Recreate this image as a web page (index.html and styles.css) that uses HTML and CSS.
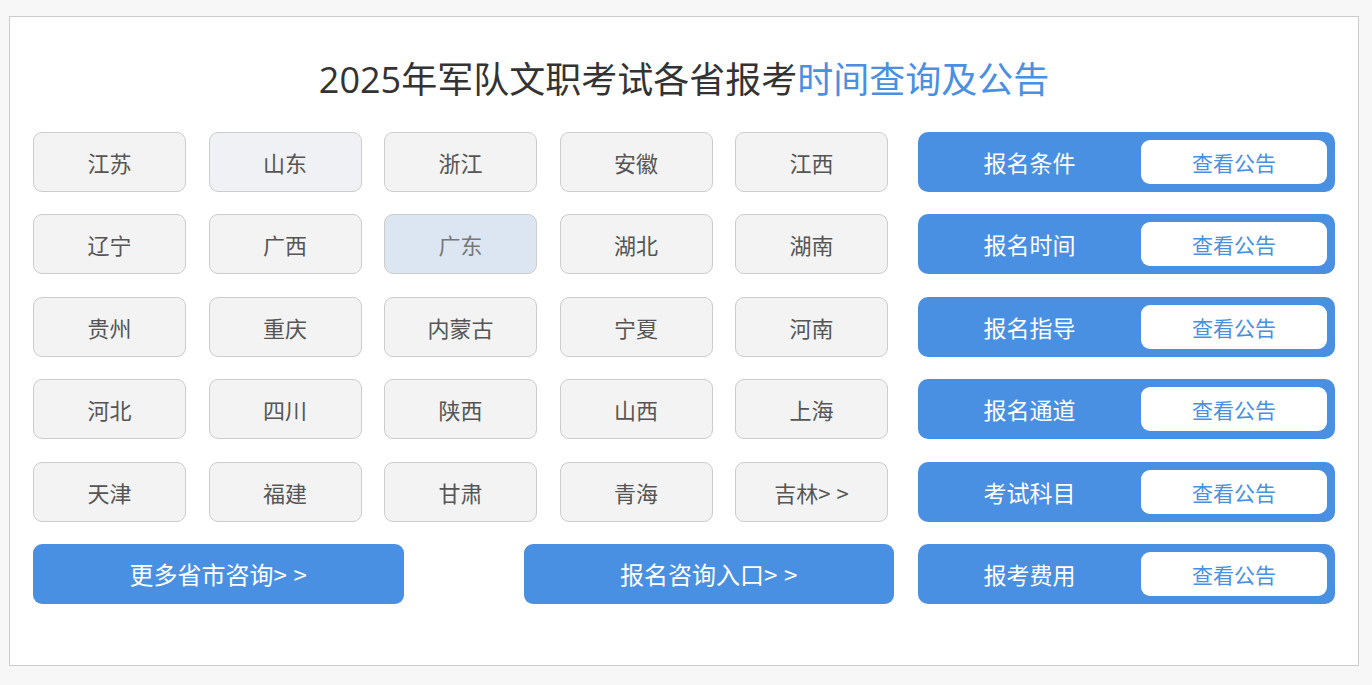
FILE: index.html
```html
<!DOCTYPE html>
<html lang="zh-CN">
<head>
<meta charset="utf-8">
<title>2025年军队文职考试各省报考时间查询及公告</title>
<link rel="stylesheet" href="styles.css">
</head>
<body>
<div class="box">
  <h1 class="title">2025年军队文职考试各省报考<span class="hl">时间查询及公告</span></h1>
  <div class="main">
    <div class="left">
      <div class="grid">
        <a class="prov">江苏</a>
        <a class="prov alt">山东</a>
        <a class="prov">浙江</a>
        <a class="prov">安徽</a>
        <a class="prov">江西</a>
        <a class="prov">辽宁</a>
        <a class="prov">广西</a>
        <a class="prov active">广东</a>
        <a class="prov">湖北</a>
        <a class="prov">湖南</a>
        <a class="prov">贵州</a>
        <a class="prov">重庆</a>
        <a class="prov">内蒙古</a>
        <a class="prov">宁夏</a>
        <a class="prov">河南</a>
        <a class="prov">河北</a>
        <a class="prov">四川</a>
        <a class="prov">陕西</a>
        <a class="prov">山西</a>
        <a class="prov">上海</a>
        <a class="prov">天津</a>
        <a class="prov">福建</a>
        <a class="prov">甘肃</a>
        <a class="prov">青海</a>
        <a class="prov">吉林<span class="arr">&gt;&gt;</span></a>
      </div>
      <div class="bottom">
        <a class="bigbtn">更多省市咨询<span class="arr">&gt;&gt;</span></a>
        <a class="bigbtn">报名咨询入口<span class="arr">&gt;&gt;</span></a>
      </div>
    </div>
    <div class="right">
      <div class="info"><span class="label">报名条件</span><a class="view">查看公告</a></div>
      <div class="info"><span class="label">报名时间</span><a class="view">查看公告</a></div>
      <div class="info"><span class="label">报名指导</span><a class="view">查看公告</a></div>
      <div class="info"><span class="label">报名通道</span><a class="view">查看公告</a></div>
      <div class="info"><span class="label">考试科目</span><a class="view">查看公告</a></div>
      <div class="info"><span class="label">报考费用</span><a class="view">查看公告</a></div>
    </div>
  </div>
</div>
</body>
</html>
```
FILE: styles.css
```css
* { box-sizing: border-box; }
html, body { margin: 0; padding: 0; }
body {
  background: #f7f7f7;
  font-family: "Open Sans", "Noto Sans CJK SC", sans-serif;
  padding: 16px 13px 0 9px;
}
.box {
  width: 1350px;
  height: 650px;
  background: #fff;
  border: 1px solid #cccccc;
  padding: 0 23px 0 23px;
}
.title {
  margin: 0;
  height: 115px;
  padding-top: 38px;
  text-align: center;
  font-size: 36px;
  font-weight: normal;
  line-height: 50px;
  color: #333;
}
.hl { color: #4a90e2; }
.main {
  display: flex;
  justify-content: space-between;
}
.left { width: 861px; }
.grid {
  display: grid;
  grid-template-columns: repeat(5, 153px);
  grid-auto-rows: 60px;
  column-gap: 22.5px;
  row-gap: 22.4px;
}
.prov {
  display: flex;
  align-items: center;
  justify-content: center;
  background: #f3f3f3;
  border: 1px solid #cccccc;
  border-radius: 9px;
  color: #555;
  font-size: 22px;
  font-family: "Noto Sans CJK SC", sans-serif;
}
.arr { letter-spacing: 0.28em; margin-right: -0.28em; }
.prov.alt { background: #f0f1f4; }
.prov.active { background: #dce6f2; color: #777; }
.bottom {
  display: flex;
  justify-content: space-between;
  margin-top: 22.4px;
}
.bigbtn {
  display: flex;
  align-items: center;
  justify-content: center;
  width: 370.5px;
  height: 60px;
  background: #4a90e2;
  border-radius: 9px;
  color: #fff;
  font-size: 24px;
  font-family: "Noto Sans CJK SC", sans-serif;
}
.right {
  width: 417px;
  display: flex;
  flex-direction: column;
  gap: 22.4px;
}
.info {
  height: 60px;
  background: #4a90e2;
  border-radius: 10px;
  display: flex;
  align-items: center;
  padding: 8px 8px 8px 0;
}
.label {
  flex: 1;
  text-align: center;
  color: #fff;
  font-size: 23px;
  font-family: "Noto Sans CJK SC", sans-serif;
}
.view {
  width: 186px;
  height: 44px;
  background: #fff;
  border-radius: 9px;
  display: flex;
  align-items: center;
  justify-content: center;
  color: #4a90e2;
  font-size: 21px;
  font-family: "Noto Sans CJK SC", sans-serif;
}
```
